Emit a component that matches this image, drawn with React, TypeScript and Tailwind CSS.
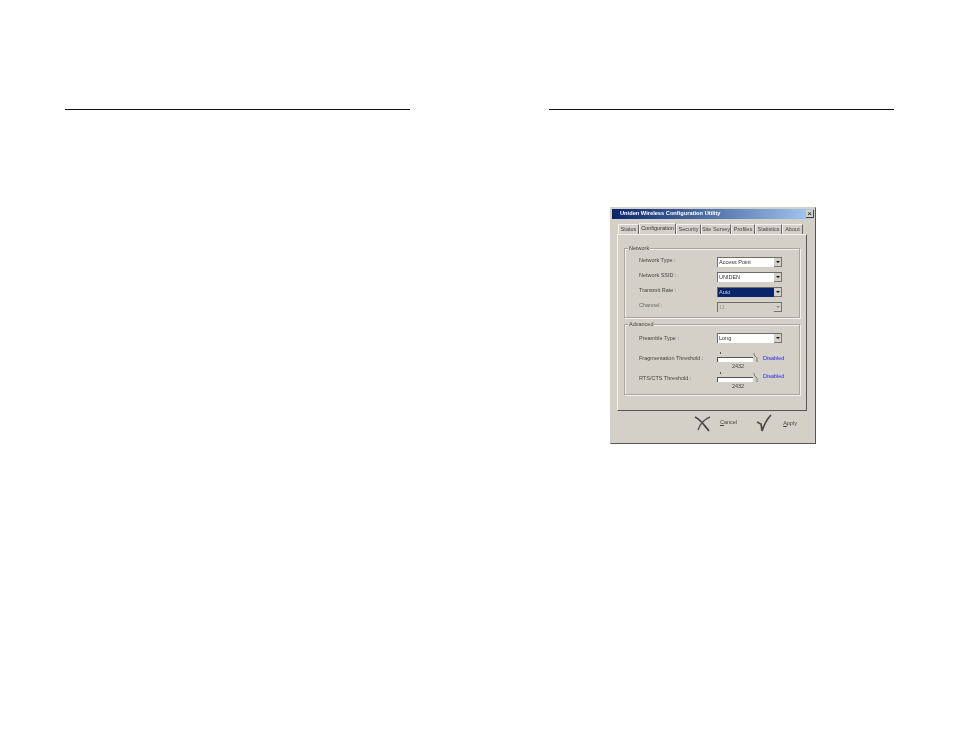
const tabs = ['Status', 'Configuration', 'Security', 'Site Survey', 'Profiles', 'Statistics', 'About']
const tabWidths = ['w-[21px]', 'w-[37px]', 'w-[25px]', 'w-[30px]', 'w-[24px]', 'w-[27px]', 'w-[21px]']

const Combo = ({ value, selected, disabled }: { value: string; selected?: boolean; disabled?: boolean }) => (
  <div
    className={`w-[65px] h-[10px] flex border-t border-l border-[#6e6c66] ${disabled ? 'bg-[#d4d0c8]' : 'bg-white'}`}
  >
    <div
      className={`flex-1 pl-[1px] flex items-center leading-none ${
        selected ? 'bg-[#0a246a] text-[#c9d2ea]' : disabled ? 'text-[#9a9890]' : 'text-[#333]'
      }`}
    >
      {value}
    </div>
    <div className="w-[8px] bg-[#d4d0c8] border-r border-b border-[#77756f] flex items-center justify-center">
      <div
        className={`w-0 h-0 border-l-[2px] border-r-[2px] border-t-[2px] border-l-transparent border-r-transparent ${
          disabled ? 'border-t-[#8a8880]' : 'border-t-black'
        }`}
      />
    </div>
  </div>
)

const Row = ({
  label,
  children,
  labelClass = 'mb-[2px] text-[#444]',
}: {
  label: string
  children: React.ReactNode
  labelClass?: string
}) => (
  <div className="flex items-center h-[10px]">
    <div className={`w-[78px] ${labelClass}`}>{label}</div>
    {children}
  </div>
)

const Slider = ({ label, disabledClass }: { label: string; disabledClass: string }) => (
  <div className="flex items-start h-[20px]">
    <div className="w-[78px] pt-[4px] text-[#444]">{label}</div>
    <div className="w-[36px]">
      <div className="ml-[3px] w-px h-[2px] bg-[#555]" />
      <div className="mt-[3px] h-[5px] bg-white border-t border-l border-[#555]" />
      <div className="mt-[2px] pl-[6px] text-center leading-none whitespace-nowrap text-[#444]">2432</div>
    </div>
    <svg width="6" height="10" viewBox="0 0 6 10" className="mt-[1px] shrink-0">
      <path d="M1 0v2l3 3v4" fill="none" stroke="#666" strokeWidth="0.8" />
    </svg>
    <div className={`ml-[4px] text-[#2a2ae0] ${disabledClass}`}>Disabled</div>
  </div>
)

const Group = ({ title, className, children }: { title: string; className: string; children: React.ReactNode }) => (
  <div className={`relative mx-[6px] border border-[#a9a69e] shadow-[inset_1px_1px_0_#f4f2ec,1px_1px_0_#f4f2ec] ${className}`}>
    <div className="absolute -top-[3px] left-[3px] bg-[#d4d0c8] px-[1px] leading-none text-[#444]">{title}</div>
    {children}
  </div>
)

export default function App() {
  return (
    <div className="w-[954px] h-[738px] bg-white pt-[109px] font-['Liberation_Sans',Arial,sans-serif]">
      <div className="grid grid-cols-2">
        <div className="pl-[65px]">
          <div className="w-[345px] h-px bg-[#111]" />
        </div>
        <div className="pl-[72px]">
          <div className="w-[345px] h-px bg-[#111]" />
          <div className="ml-[61px] mt-[97px] w-[206px] h-[237px] bg-[#d4d0c8] border border-r-[#555] border-b-[#555] border-t-[#d4d0c8] border-l-[#d4d0c8] text-[5.5px] leading-none blur-[0.3px]">
            <div className="h-[10px] mx-[1px] mt-[1px] flex items-center justify-between pl-[8px] bg-gradient-to-r from-[#0a246a] to-[#a6caf0] text-white text-[5.7px] font-bold">
              <span>Uniden Wireless Configuration Utility</span>
              <div className="w-[8px] h-[8px] bg-[#d4d0c8] border-r border-b border-[#444] flex items-center justify-center text-black text-[8px] font-normal">
                ×
              </div>
            </div>

            <div className="mt-[4px] ml-[7px] flex h-[11px] items-end text-[#444]">
              {tabs.map((tab, i) => (
                <div
                  key={tab}
                  className={`${tabWidths[i]} flex items-center justify-center whitespace-nowrap border-t border-l border-r border-t-[#f4f2ec] border-l-[#f4f2ec] border-r-[#666] ${
                    i === 1 ? 'h-[11px] bg-[#d4d0c8] text-[#333]' : 'h-[10px]'
                  }`}
                >
                  {tab}
                </div>
              ))}
            </div>

            <div className="ml-[6px] w-[190px] h-[177px] border-t border-l border-[#f4f2ec] border-r border-b border-r-[#555] border-b-[#555] pt-[13px]">
              <Group title="Network" className="h-[70px] pt-[8px] pl-[14px]">
                <div className="flex flex-col gap-[5px]">
                  <Row label="Network Type :">
                    <Combo value="Access Point" />
                  </Row>
                  <Row label="Network SSID :">
                    <Combo value="UNIDEN" />
                  </Row>
                  <Row label="Transmit Rate :">
                    <Combo value="Auto" selected />
                  </Row>
                  <Row label="Channel :" labelClass="mb-[2px] text-[#666]">
                    <Combo value="11" disabled />
                  </Row>
                </div>
              </Group>
              <Group title="Advanced" className="mt-[6px] h-[71px] pt-[8px] pl-[14px]">
                <Row label="Preamble Type :" labelClass="mt-[2px] text-[#444]">
                  <Combo value="Long" />
                </Row>
                <div className="mt-[9px] flex flex-col">
                  <Slider label="Fragmentation Threshold :" disabledClass="pt-[4px]" />
                  <Slider label="RTS/CTS Threshold :" disabledClass="pt-[2px]" />
                </div>
              </Group>
            </div>

            <div className="mt-[3px] flex items-center text-[#444]">
              <svg width="17" height="17" viewBox="0 0 17 17" className="ml-[83px]">
                <path d="M1 2C6 4 11 11 15 16" fill="none" stroke="#444" strokeWidth="1.8" />
                <path d="M16 2C11 4 6 9 4 15" fill="none" stroke="#555" strokeWidth="1.4" />
              </svg>
              <span className="ml-[9px]">
                <span className="underline">C</span>ancel
              </span>
              <svg width="16" height="18" viewBox="0 0 16 18" className="ml-[19px]">
                <path d="M1 8l4 2 1 7C8 11 11 5 15 1" fill="none" stroke="#4a4a4a" strokeWidth="1.7" />
              </svg>
              <span className="ml-[11px] mt-[1px]">
                <span className="underline">A</span>pply
              </span>
            </div>
          </div>
        </div>
      </div>
    </div>
  )
}
